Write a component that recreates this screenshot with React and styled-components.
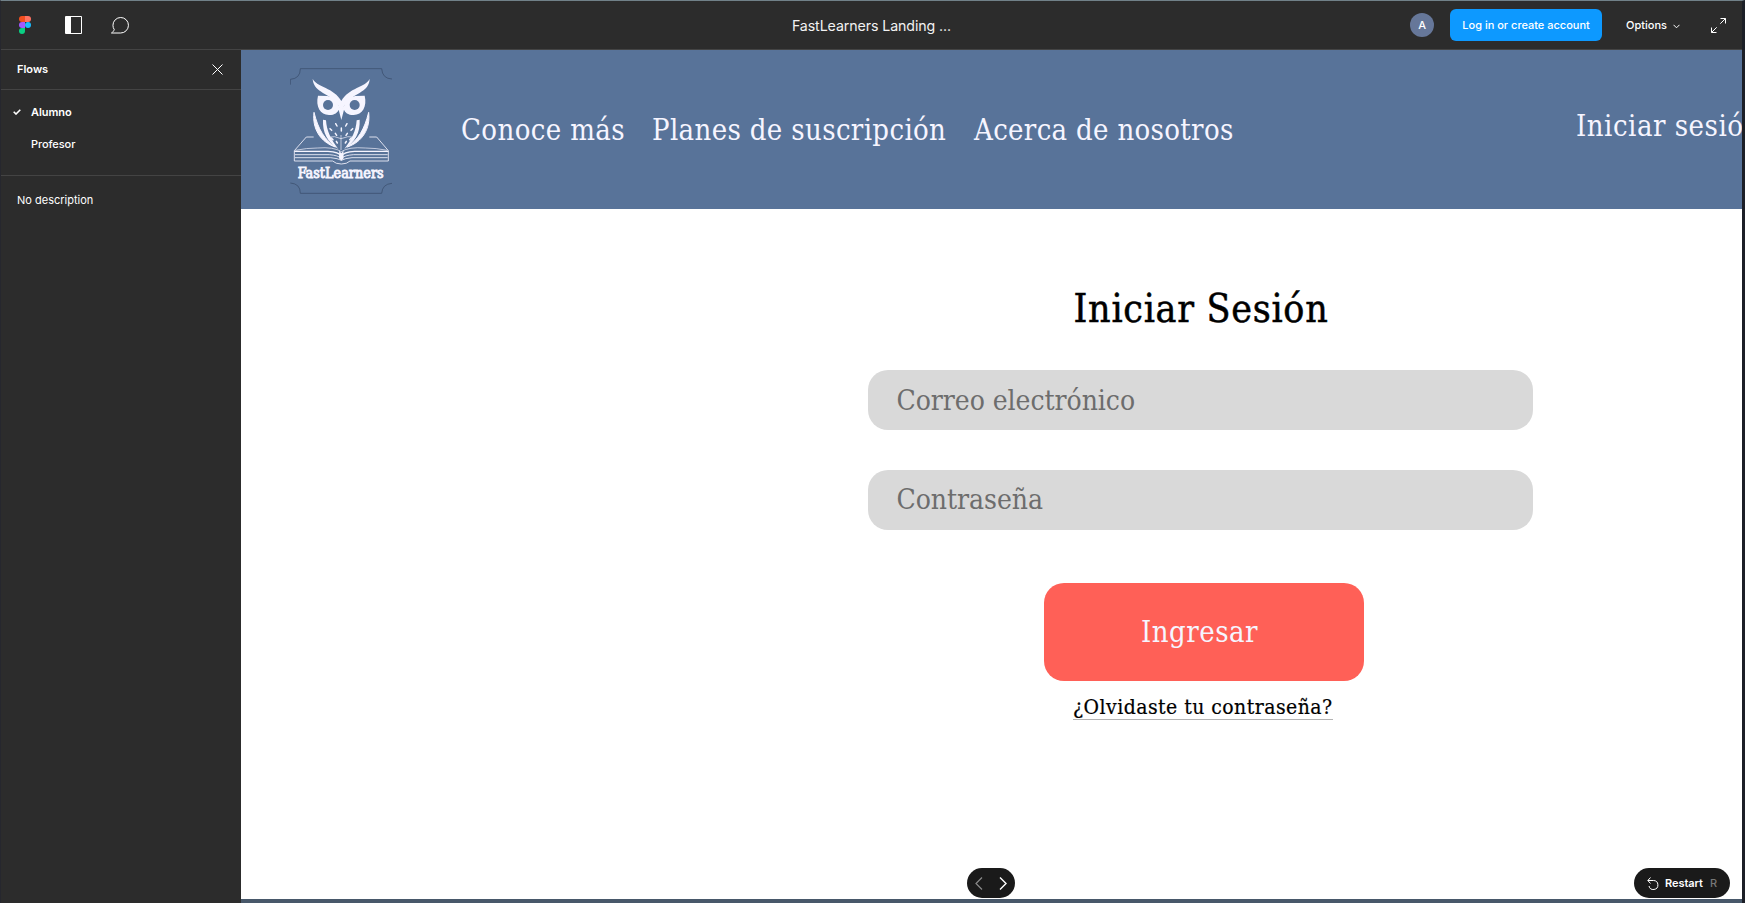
import React from "react";
import styled, { createGlobalStyle } from "styled-components";

const Global = createGlobalStyle`
  * { box-sizing: border-box; }
  body { margin: 0; overflow: hidden; background: #2c2c2c; font-family: Inter, "Liberation Sans", sans-serif; }
`;

const Frame = styled.div`
  width: 1745px;
  height: 903px;
  overflow: hidden;
  display: flex;
  flex-direction: column;
  background: #2c2c2c;
  border-top: 1px solid #718189;
  border-left: 1px solid #26272e;
  border-right: 3px solid #1c1f27;
`;

const Toolbar = styled.header`
  flex: none;
  height: 49px;
  display: grid;
  grid-template-columns: 1fr auto 1fr;
  align-items: center;
  border-bottom: 1px solid #444;
  color: #fff;
`;

const ToolGroup = styled.div`
  display: flex;
  align-items: center;
  padding-left: 18px;
  gap: 28px;
`;

const FileTitle = styled.div`
  font-size: 14.2px;
  line-height: 20px;
  letter-spacing: -0.09px;
  padding-top: 1px;
  color: #f2f2f2;
`;

const AccountGroup = styled.div`
  display: flex;
  justify-content: flex-end;
  align-items: center;
  padding-right: 16px;
`;

const Avatar = styled.div`
  width: 24px;
  height: 24px;
  border-radius: 50%;
  background: #667799;
  font-size: 11px;
  font-weight: 500;
  display: grid;
  place-items: center;
  margin-right: 16px;
`;

const LoginButton = styled.button`
  width: 152px;
  height: 32px;
  border: 0;
  padding: 0;
  border-radius: 6px;
  background: #0d99ff;
  color: #fff;
  font: 500 11px/16px Inter, sans-serif;
  white-space: nowrap;
  margin-right: 24px;
`;

const OptionsLabel = styled.div`
  font-size: 11px;
  font-weight: 500;
  display: flex;
  align-items: center;
  gap: 6px;
  margin-right: 31px;

  svg { margin-top: 3px; }
`;

const Body = styled.div`
  flex: 1;
  min-height: 0;
  display: flex;
`;

const Sidebar = styled.aside`
  flex: none;
  width: 240px;
  color: #fff;
  font-size: 11px;
  line-height: 16px;
`;

const SidebarHeader = styled.div`
  height: 40px;
  display: flex;
  align-items: center;
  justify-content: space-between;
  padding: 0 18px 1px 16px;
  font-weight: 600;
  border-bottom: 1px solid #444;
`;

const FlowList = styled.div`
  height: 86px;
  padding-top: 6px;
  border-bottom: 1px solid #444;
`;

const FlowItem = styled.div`
  height: 32px;
  display: grid;
  grid-template-columns: 18px auto;
  align-items: center;
  padding-left: 12px;
  letter-spacing: -0.07px;
  font-weight: ${(p) => (p.$selected ? 600 : 500)};
`;

const Description = styled.div`
  padding: 16px;
`;

const Prototype = styled.main`
  flex: 1;
  min-width: 0;
  position: relative;
  overflow: hidden;
  background: #fff;
  border-bottom: 4px solid #48586a;
  font-family: "DejaVu Serif Condensed", "DejaVu Serif", serif;
  font-stretch: condensed;
`;

const SiteHeader = styled.div`
  height: 159px;
  background: #587399;
  display: flex;
  color: #f6f5ff;
  padding-left: 49px;
`;

const LogoSlot = styled.div`
  width: 102px;
  padding-top: 18px;
  margin-right: 69px;

  svg { display: block; }
`;

const SiteNav = styled.nav`
  display: flex;
  padding-top: 60px;
  flex: none;
`;

const NavLink = styled.a`
  flex: none;
  width: ${(p) => p.$width}px;
  font-size: 29px;
  line-height: 40px;
  letter-spacing: ${(p) => p.$track}px;
  white-space: nowrap;
`;

const SessionLink = styled(NavLink)`
  margin-left: 327px;
  padding-top: 56px;
`;

const LoginForm = styled.div`
  width: 665px;
  margin-left: 627px;
  padding-top: 75px;
  display: flex;
  flex-direction: column;
  align-items: center;
`;

const Heading = styled.h1`
  margin: 0 0 36px;
  height: 50px;
  font-size: 39px;
  line-height: 50px;
  font-weight: 400;
  letter-spacing: 0.7px;
  padding-left: 1px;
  white-space: nowrap;
  color: #000;
  -webkit-text-stroke: 0.5px #000;
`;

const Field = styled.div`
  width: 665px;
  height: 60px;
  margin-bottom: 40px;
  padding: ${(p) => p.$drop || 0}px 0 0 28.5px;
  border-radius: 20px;
  background: #d9d9d9;
  color: #6d6d6d;
  font-size: 28px;
  line-height: 60px;
  letter-spacing: -0.05px;
`;

const SubmitButton = styled.button`
  width: 320px;
  height: 98px;
  margin: 13px 0 0 7px;
  padding: 0 9px 0 0;
  border: 0;
  border-radius: 20px;
  background: #ff6057;
  color: #f6f5ff;
  font: inherit;
  font-size: 29px;
  letter-spacing: 0.5px;
`;

const ForgotLink = styled.a`
  margin-top: 12px;
  height: 27px;
  width: 260px;
  margin-left: 5px;
  font-size: 21px;
  line-height: 28px;
  letter-spacing: 0.45px;
  white-space: nowrap;
  color: #000;
  border-bottom: 1px solid #b3b3b3;
  -webkit-text-stroke: 0.2px #000;
`;

const Pill = styled.div`
  position: absolute;
  bottom: 1px;
  height: 30px;
  border-radius: 15px;
  background: #1a1a1a;
  color: #fff;
  display: flex;
  align-items: center;
  font: 600 11px/16px Inter, sans-serif;
`;

const PagerPill = styled(Pill)`
  left: 726px;
  width: 48px;
  justify-content: space-between;
  padding: 0 8px;
`;

const RestartPill = styled(Pill)`
  right: 12px;
  width: 96px;
  padding-left: 13px;
  gap: 6px;
  letter-spacing: -0.05px;
`;

const KeyHint = styled.span`
  color: #777;
  font-weight: 500;
  margin-left: 1px;
`;

const Line = styled.svg`
  display: block;
  flex: none;
  fill: none;
  stroke: ${(p) => (p.$dim ? "#8a8a8a" : "currentColor")};
`;

const PanelGlyph = styled(Line)`
  margin-left: 6px;
`;

const FigmaMark = () => (
  <svg width="12" height="18" viewBox="0 0 12 18">
    <path d="M3 0h3v6H3a3 3 0 0 1 0-6z" fill="#f24e1e" />
    <path d="M6 0h3a3 3 0 0 1 0 6H6z" fill="#ff7262" />
    <path d="M3 6h3v6H3a3 3 0 0 1 0-6z" fill="#a259ff" />
    <circle cx="9" cy="9" r="3" fill="#1abcfe" />
    <path d="M3 12h3v3a3 3 0 1 1-3-3z" fill="#0acf83" />
  </svg>
);

const PanelIcon = () => (
  <PanelGlyph width="17" height="18" viewBox="0 0 17 18">
    <path d="M.5 .5h16v17H.5z" />
    <path d="M1 1h5v16H1z" fill="#fff" stroke="none" />
  </PanelGlyph>
);

const CommentIcon = () => (
  <Line width="19" height="17" viewBox="0 0 19 17">
    <path d="M1.500 16h9.200a7.750 7.750 0 1 0-7.750-7.750c0 1.700.5 3.200 1.300 4.400C3.700 14.100 2.500 15.400 1.500 16z" strokeLinejoin="round" />
  </Line>
);

const LogoName = styled.text`
  font: 400 44px "DejaVu Serif Condensed", "DejaVu Serif", serif;
  fill: #f6f5ff;
  stroke: #f6f5ff;
  stroke-width: 2.5px;
`;

const OwlLogo = () => (
  <svg width="102" height="127" viewBox="60 54 306 381" fill="none">
    <g stroke="#3d5271" strokeWidth="2.5">
      <path d="M61 104V88Q91 86 91 56H335Q337 86 366 87" />
      <path d="M61 399Q91 401 91 430H335Q337 402 366 400" />
    </g>
    <g stroke="#f6f5ff" strokeWidth="2.5">
      <path d="M131 261H109L73 302V333H188Q197 342 214 342Q231 342 240 333H355V302L320 261H298" />
      <path d="M73 304H174Q207 306 214 318Q221 306 254 304H355" strokeWidth="4" />
      <path d="M75 314H178Q204 316 214 325Q224 316 250 314H353M75 323H182Q204 325 214 331Q224 325 246 323H353" />
      <path d="M76 301Q110 294 142 294Q192 290 214 305Q236 290 286 294Q318 294 352 301M213 255V300M172 262Q195 256 213 266Q233 256 256 262" strokeWidth="2" />
    </g>
    <g fill="#f6f5ff">
      <path d="M128 86C139 111 193 113 214 153C235 113 289 111 299 86C298 124 257 129 236 151C224 164 219 173 214 185C209 173 204 164 192 151C171 129 130 124 128 86Z" />
      <path d="M144 137L172 138C190 140 201 151 205 166L214 178L223 166C227 151 238 140 256 138L284 137C292 170 277 194 251 195C233 195 225 187 222 179L214 210L206 179C203 187 195 195 177 195C151 194 136 170 144 137Z" />
      <path d="M132 187C126 236 151 276 196 291C163 268 145 239 132 187ZM296 187C302 236 277 276 232 291C265 268 283 239 296 187Z" stroke="#f6f5ff" strokeWidth="3" />
      <path d="M159 209C157 247 172 276 205 297C182 268 170 242 168 211ZM269 209C271 247 256 276 223 297C246 268 258 242 260 211Z" />
      <path d="M208 299Q214 320 220 299L221 325L214 332L207 325Z" />
    </g>
    <g fill="#587399">
      <circle cx="174" cy="165" r="15" />
      <circle cx="254" cy="165" r="15" />
    </g>
    <path
      d="M197 221l4 7M231 221l-4 7M180 236l5 5M248 236l-5 5M214 234v9M196 250l4 6M232 250l-4 6M184 264l5 5M244 264l-5 5M199 274l3 5M229 274l-3 5"
      stroke="#f6f5ff"
      strokeWidth="4.5"
      strokeLinecap="round"
    />
    <LogoName x="83" y="384" textLength="258" lengthAdjust="spacingAndGlyphs">FastLearners</LogoName>
  </svg>
);

export default function App() {
  return (
    <>
      <Global />
      <Frame>
        <Toolbar>
          <ToolGroup>
            <FigmaMark />
            <PanelIcon />
            <CommentIcon />
          </ToolGroup>
          <FileTitle>FastLearners Landing ...</FileTitle>
          <AccountGroup>
            <Avatar>A</Avatar>
            <LoginButton>Log in or create account</LoginButton>
            <OptionsLabel>
              Options
              <Line width="7" height="5" viewBox="0 0 7 5"><path d="M.5 .8l3 3 3-3" /></Line>
            </OptionsLabel>
            <Line width="15" height="15" viewBox="0 0 15 15">
              <path d="M9.500 .5h5v5M14.500 .5L9.300 5.700M.5 9.500v5h5M.5 14.500l5.200-5.200" />
            </Line>
          </AccountGroup>
        </Toolbar>
        <Body>
          <Sidebar>
            <SidebarHeader>
              Flows
              <Line width="11" height="11" viewBox="0 0 11 11"><path d="M.5 .5l10 10M10.500 .5l-10 10" /></Line>
            </SidebarHeader>
            <FlowList>
              <FlowItem $selected>
                <Line width="8" height="6" viewBox="0 0 8 6"><path d="M.7 2.700l2.300 2.300L7.300 .7" strokeWidth="1.6" /></Line>
                Alumno
              </FlowItem>
              <FlowItem>
                <span />
                Profesor
              </FlowItem>
            </FlowList>
            <Description>No description</Description>
          </Sidebar>
          <Prototype>
            <SiteHeader>
              <LogoSlot><OwlLogo /></LogoSlot>
              <SiteNav>
                <NavLink $width={191} $track={0.39}>Conoce más</NavLink>
                <NavLink $width={322} $track={0.35}>Planes de suscripción</NavLink>
                <NavLink $width={275} $track={0.32}>Acerca de nosotros</NavLink>
              </SiteNav>
              <SessionLink $width={165} $track={0.5}>Iniciar sesió</SessionLink>
            </SiteHeader>
            <LoginForm>
              <Heading>Iniciar Sesión</Heading>
              <Field $drop={1}>Correo electrónico</Field>
              <Field>Contraseña</Field>
              <SubmitButton>Ingresar</SubmitButton>
              <ForgotLink>¿Olvidaste tu contraseña?</ForgotLink>
            </LoginForm>
            <PagerPill>
              <Line $dim width="8" height="13" viewBox="0 0 8 13"><path d="M7 .5l-6 6 6 6" strokeWidth="1.2" /></Line>
              <Line width="8" height="13" viewBox="0 0 8 13"><path d="M1 .5l6 6-6 6" strokeWidth="1.4" /></Line>
            </PagerPill>
            <RestartPill>
              <Line width="12" height="13" viewBox="0 0 12 13"><path d="M3.500 .5L.8 3.500l2.700 3M1 3.500h5.500a4.500 4.500 0 1 1-4.500 5.500" /></Line>
              Restart
              <KeyHint>R</KeyHint>
            </RestartPill>
          </Prototype>
        </Body>
      </Frame>
    </>
  );
}
